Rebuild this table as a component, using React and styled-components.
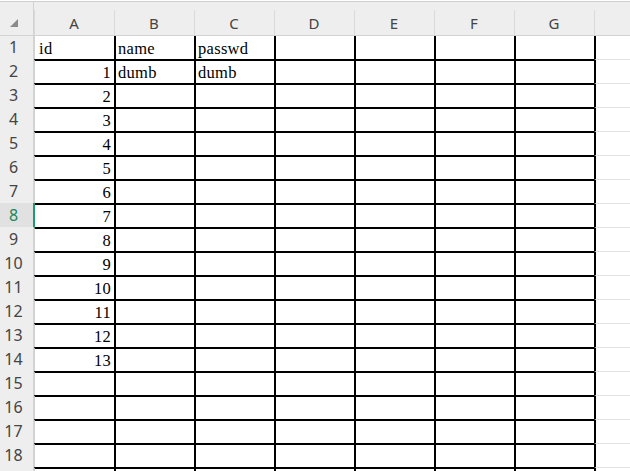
import React from "react";
import styled, { createGlobalStyle } from "styled-components";

const GlobalStyle = createGlobalStyle`
  html, body { margin: 0; padding: 0; background: #fff; overflow: hidden; }
  #root { width: 630px; height: 471px; overflow: hidden; }
`;

// The 8th column (H) is cut off by the window edge, so its letter is not visible.
const COLS = ["A", "B", "C", "D", "E", "F", "G", ""];
const TABLE_COLS = 7;
const ROWS = 19;
const VISIBLE_ROW_LABELS = 18;
const ACTIVE_ROW = 8;

const cells = {
  "1-0": { v: "id" },
  "1-1": { v: "name" },
  "1-2": { v: "passwd" },
  "2-1": { v: "dumb" },
  "2-2": { v: "dumb" },
};
for (let i = 1; i <= 13; i++) cells[`${i + 1}-0`] = { v: String(i), num: true };

const HEADER_BG = "#eeeeee";
const HEADER_LINE = "#d3d3d3";
const GREEN_BAR = "#1f9d68";
const GREEN_TEXT = "#17875a";

const Sheet = styled.div`
  display: grid;
  grid-template-columns: 34px repeat(8, 80px);
  grid-template-rows: 35px 23px;
  grid-auto-rows: 24px;
  width: 630px;
  height: 471px;
  overflow: hidden;
  padding-top: 1px;
  box-sizing: border-box;
  background: #fff;
`;

const HeaderBase = styled.div`
  box-sizing: border-box;
  background: ${HEADER_BG};
  border-top: 1px solid #cfcfcf;
  border-bottom: 1px solid ${HEADER_LINE};
`;

const Corner = styled(HeaderBase)`
  padding: 17px 0 0 10px;
  border-right: 1px solid ${HEADER_LINE};
  svg { display: block; }
`;

const ColHeader = styled(HeaderBase)`
  position: relative;
  padding-top: 9px;
  line-height: 24px;
  text-align: center;
  font-family: "Noto Sans", "Open Sans", sans-serif;
  font-size: 15px;
  color: #444;
  &::before {
    content: "";
    position: absolute;
    left: 0;
    top: 8px;
    bottom: 0;
    width: 1px;
    background: #d9d9d9;
  }
`;

const RowHeader = styled.div`
  position: relative;
  box-sizing: border-box;
  background: ${(p) => (p.$active ? "#e1e1e1" : HEADER_BG)};
  border-right: 1px solid ${HEADER_LINE};
  padding-right: 6px;
  text-align: center;
  font-family: "Noto Sans", "Open Sans", sans-serif;
  font-size: 16px;
  line-height: ${(p) => (p.$first ? "22px" : "24px")};
  color: ${(p) => (p.$active ? GREEN_TEXT : "#444")};
  &::after {
    content: "";
    display: ${(p) => (p.$active ? "block" : "none")};
    position: absolute;
    top: 0;
    bottom: -1px;
    right: -2px;
    width: 2px;
    background: ${GREEN_BAR};
  }
`;

const topBorder = (p) => {
  if (p.$row === 1) return "none";
  if (p.$col >= TABLE_COLS) return "1px solid #e3e3e3";
  return "2px solid #000";
};

const leftBorder = (p) => {
  if (p.$col === 0) return `1px solid ${HEADER_LINE}`;
  return "2px solid #000";
};

const Cell = styled.div`
  box-sizing: border-box;
  overflow: hidden;
  white-space: nowrap;
  background: #fff;
  border-top: ${topBorder};
  border-left: ${leftBorder};
  padding: ${(p) => (p.$row === 1 ? "3px" : "1px")} 3px 0
    ${(p) => (p.$col === 0 ? "4px" : "2px")};
  line-height: ${(p) => (p.$row === 1 ? "20px" : "21px")};
  text-align: ${(p) => (p.$num ? "right" : "left")};
  font-family: "Liberation Serif", "Times New Roman", serif;
  font-size: 16.5px;
  letter-spacing: 0.3px;
  color: #000;
`;

const CornerMark = () => (
  <svg width="8" height="8" viewBox="0 0 8 8">
    <polygon points="8,0 8,8 0,8" fill="#8a8a8a" />
  </svg>
);

export default function App() {
  const rows = [];
  for (let r = 1; r <= ROWS; r++) {
    rows.push(
      <RowHeader key={`rh-${r}`} $active={r === ACTIVE_ROW} $first={r === 1}>
        {r <= VISIBLE_ROW_LABELS ? r : null}
      </RowHeader>
    );
    COLS.forEach((_, c) => {
      const data = cells[`${r}-${c}`];
      rows.push(
        <Cell key={`c-${r}-${c}`} $row={r} $col={c} $num={data?.num}>
          {data?.v}
        </Cell>
      );
    });
  }

  return (
    <>
      <GlobalStyle />
      <Sheet>
        <Corner>
          <CornerMark />
        </Corner>
        {COLS.map((c, i) => (
          <ColHeader key={i}>{c}</ColHeader>
        ))}
        {rows}
      </Sheet>
    </>
  );
}
